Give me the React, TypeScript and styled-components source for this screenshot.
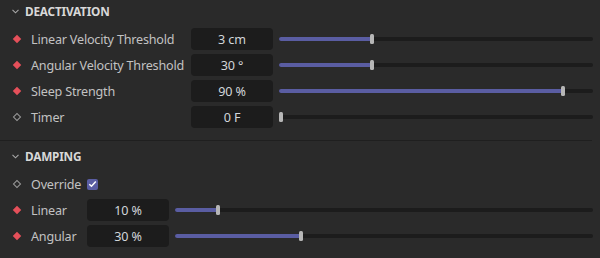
import styled, { createGlobalStyle } from "styled-components";

const GlobalStyle = createGlobalStyle`
  html, body {
    margin: 0;
    padding: 0;
    background: #2a2a2a;
  }
  body {
    font-family: "Noto Sans", "Open Sans", sans-serif;
  }
`;

const Panel = styled.div`
  width: 600px;
  height: 258px;
  box-sizing: border-box;
  padding-right: 8px;
  background: #2a2a2a;
  color: #c4c4c4;
  overflow: hidden;
`;

const Section = styled.section<{ $top?: number }>`
  display: flex;
  flex-direction: column;
  padding-top: ${({ $top }) => $top ?? 0}px;
`;

const Header = styled.div`
  display: flex;
  align-items: center;
  height: 22px;
  padding-left: 12px;
  gap: 6px;
  margin-bottom: 4px;
  font-size: 11.8px;
  font-weight: 700;
  color: #d8d8d8;
  letter-spacing: -0.2px;
`;

const Separator = styled.div`
  height: 1px;
  margin-top: 10px;
  background: #1f1f1f;
`;

const Row = styled.div<{ $label: number }>`
  display: grid;
  grid-template-columns: ${({ $label }) => $label}px 82px 1fr;
  align-items: center;
  height: 26px;
  padding-left: 13px;
`;

const LabelCell = styled.div`
  display: flex;
  align-items: center;
  gap: 11px;
  font-size: 12.6px;
  letter-spacing: -0.2px;
  color: #c2c2c2;
  white-space: nowrap;
`;

const Diamond = styled.span<{ $filled: boolean }>`
  width: 6px;
  height: 6px;
  margin-left: 1px;
  transform: rotate(45deg);
  box-sizing: border-box;
  background: ${({ $filled }) => ($filled ? "#e5505a" : "transparent")};
  border: ${({ $filled }) => ($filled ? "none" : "1.5px solid #9a9a9a")};
  flex: none;
`;

const ValueBox = styled.div`
  height: 22px;
  border-radius: 4px;
  background: #1c1c1c;
  display: flex;
  align-items: center;
  justify-content: center;
  font-size: 12.6px;
  letter-spacing: -0.1px;
  color: #d2d6da;
`;

const Slider = styled.div`
  position: relative;
  height: 10px;
  margin-left: 6px;
  margin-right: -1px;
  display: flex;
  align-items: center;
`;

const Track = styled.div`
  position: relative;
  flex: 1;
  height: 4px;
  border-radius: 2px;
  background: #1c1c1c;
`;

const Fill = styled.div`
  position: absolute;
  left: 0;
  top: 0;
  bottom: 0;
  border-radius: 2px;
  background: #5a5da2;
`;

const Thumb = styled.div`
  position: absolute;
  top: -3px;
  width: 4px;
  height: 10px;
  border-radius: 1.5px;
  background: #b6b6b6;
`;

const Check = styled.span`
  width: 11px;
  height: 11px;
  border-radius: 2px;
  background: #5a5da2;
  display: flex;
  align-items: center;
  justify-content: center;
`;

function Chevron() {
  return (
    <svg width="7" height="5" viewBox="0 0 7 5">
      <path d="M0.5 0.8 L3.5 3.8 L6.5 0.8" fill="none" stroke="#a8a8a8" strokeWidth="1.1" />
    </svg>
  );
}

function Range({ value }: { value: number }) {
  return (
    <Slider>
      <Track>
        <Fill style={{ width: `calc((100% - 4px) * ${value} + 2px)` }} />
        <Thumb style={{ left: `calc((100% - 4px) * ${value})` }} />
      </Track>
    </Slider>
  );
}

type Param = { label: string; value: string; pos: number; key?: boolean };

function ParamRow({ p, labelWidth }: { p: Param; labelWidth: number }) {
  return (
    <Row $label={labelWidth}>
      <LabelCell>
        <Diamond $filled={p.key !== false} />
        {p.label}
      </LabelCell>
      <ValueBox>{p.value}</ValueBox>
      <Range value={p.pos} />
    </Row>
  );
}

const deactivation: Param[] = [
  { label: "Linear Velocity Threshold", value: "3 cm", pos: 0.295 },
  { label: "Angular Velocity Threshold", value: "30 °", pos: 0.295 },
  { label: "Sleep Strength", value: "90 %", pos: 0.91 },
  { label: "Timer", value: "0 F", pos: 0, key: false },
];

const damping: Param[] = [
  { label: "Linear", value: "10 %", pos: 0.1 },
  { label: "Angular", value: "30 %", pos: 0.3 },
];

export default function App() {
  return (
    <>
      <GlobalStyle />
      <Panel>
        <Section>
          <Header>
            <Chevron />
            DEACTIVATION
          </Header>
          {deactivation.map((p) => (
            <ParamRow key={p.label} p={p} labelWidth={178} />
          ))}
          <Separator />
        </Section>
        <Section $top={4}>
          <Header>
            <Chevron />
            DAMPING
          </Header>
          <Row $label={74}>
            <LabelCell>
              <Diamond $filled={false} />
              Override
            </LabelCell>
            <div>
              <Check>
                <svg width="9" height="8" viewBox="0 0 9 8">
                  <path d="M1.3 4.2 L3.5 6.3 L7.8 1.6" fill="none" stroke="#ffffff" strokeWidth="1.5" />
                </svg>
              </Check>
            </div>
          </Row>
          {damping.map((p) => (
            <ParamRow key={p.label} p={p} labelWidth={74} />
          ))}
        </Section>
      </Panel>
    </>
  );
}
